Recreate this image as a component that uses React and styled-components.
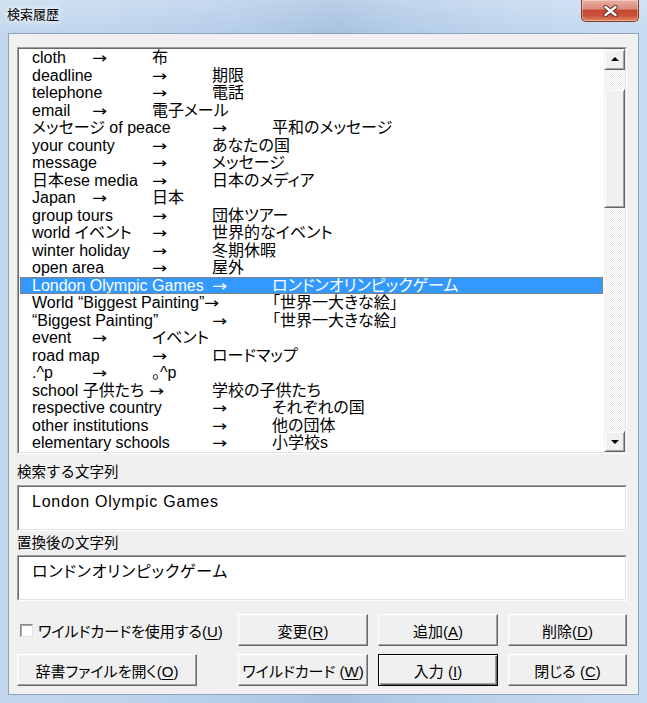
import React from 'react';
import styled, { createGlobalStyle, css } from 'styled-components';

const UI = `"Liberation Sans", "Noto Sans CJK JP", sans-serif`;
const JP = `"Noto Sans CJK JP", sans-serif`;

const GlobalStyle = createGlobalStyle`
  html, body { margin: 0; padding: 0; }
  body { width: 647px; height: 703px; overflow: hidden; background: #c4d8ee; }
`;

const Window = styled.div`
  width: 647px;
  height: 703px;
  box-sizing: border-box;
  display: flex;
  flex-direction: column;
  padding: 0 8px 8px 8px;
  font-family: ${UI};
  background:
    linear-gradient(180deg, rgba(255,255,255,0.22) 0px, rgba(255,255,255,0) 33px),
    linear-gradient(90deg, #c3d8ee 0%, #bed4ec 18%, #b5cde9 36%, #a7c1df 52%, #b2cbe7 62%, #bfd5ed 80%, #c6dbf1 100%);
`;

const TitleBar = styled.div`
  height: 33px;
  flex: none;
  margin: 0 -8px;
  padding: 0 8px 0 7px;
  display: flex;
  justify-content: space-between;
  align-items: flex-start;
`;

const Title = styled.div`
  margin-top: 6px;
  font-family: ${JP};
  font-size: 13px;
  line-height: 16px;
  color: #000;
  text-shadow: 0 0 5px #fff, 0 0 9px rgba(255,255,255,0.9);
`;

const CloseButton = styled.div`
  width: 58px;
  height: 22px;
  box-sizing: border-box;
  border: 1px solid #833a2c;
  border-top: none;
  border-radius: 0 0 5px 5px;
  background: linear-gradient(180deg, #eab0a3 0%, #dc8c7c 42%, #c4452d 50%, #c8533a 75%, #df8a5f 100%);
  box-shadow: inset 0 0 0 1px rgba(255,255,255,0.35);
  display: flex;
  align-items: center;
  justify-content: center;
`;

const Client = styled.div`
  flex: 1;
  min-height: 0;
  background: #f0f0f0;
  border: 1px solid #8fa3bb;
  padding: 13px 11px 8px 8px;
  display: flex;
  flex-direction: column;
`;

const SunkenOuter = styled.div`
  box-sizing: border-box;
  height: ${p => p.$h}px;
  flex: none;
  border: 1px solid;
  border-color: #a0a0a0 #ffffff #ffffff #a0a0a0;
  display: flex;
`;

const SunkenInner = styled.div`
  flex: 1;
  min-width: 0;
  border: 1px solid;
  border-color: #696969 #e3e3e3 #e3e3e3 #696969;
  background: #fff;
  display: flex;
  overflow: hidden;
`;

const Rows = styled.div`
  flex: 1;
  min-width: 0;
  padding: 0 1px;
  overflow: hidden;
`;

const Row = styled.div`
  height: 17.5px;
  line-height: 17.5px;
  padding-left: 12px;
  font-size: 16px;
  font-feature-settings: "palt" 1;
  white-space: pre;
  tab-size: 60px;
  color: #000;
  box-sizing: border-box;
  ${p => p.$selected && css`
    background: #3399ff;
    color: #fff;
    outline: 1px dotted #c86a12;
    outline-offset: -1px;
  `}
`;

const RowArrow = styled.span`
  display: inline-block;
  font-family: "DejaVu Sans", sans-serif;
  font-size: 15px;
  line-height: 17.5px;
  font-feature-settings: normal;
  transform: scaleX(1.2);
  transform-origin: left center;
  margin-right: 2.6px;
`;

const ScrollBar = styled.div`
  width: 21px;
  flex: none;
  display: flex;
  flex-direction: column;
`;

const raised = css`
  box-sizing: border-box;
  background: #f0f0f0;
  border: 1px solid;
  border-color: #f0f0f0 #696969 #696969 #f0f0f0;
  box-shadow: inset 1px 1px 0 #ffffff, inset -1px -1px 0 #a0a0a0;
`;

const ScrollButton = styled.div`
  ${raised};
  height: 21px;
  flex: none;
  display: flex;
  align-items: center;
  justify-content: center;
`;

const Arrow = styled.span`
  width: 0;
  height: 0;
  border-left: 4px solid transparent;
  border-right: 4px solid transparent;
  ${p => (p.$down
    ? css`border-top: 4px solid #000; margin-top: 1px;`
    : css`border-bottom: 4px solid #000; margin-bottom: 1px;`)}
`;

const Track = styled.div`
  flex: 1;
  background: repeating-conic-gradient(#ffffff 0 25%, #ebebeb 0 50%) 0 0 / 2px 2px;
`;

const Thumb = styled.div`
  ${raised};
  height: ${p => p.$size}px;
  margin-top: ${p => p.$offset}px;
`;

const FieldLabel = styled.div`
  flex: none;
  font-family: ${JP};
  font-size: 14.5px;
  line-height: 20px;
  color: #000;
  padding: ${p => (p.$first ? '7px 0 4px 0' : '1px 0 3px 0')};
`;

const FieldText = styled.div`
  padding: 5px 0 0 13px;
  font-size: 16px;
  line-height: 20px;
  letter-spacing: 0.75px;
  font-feature-settings: "palt" 1;
  color: #000;
  white-space: pre;
`;

const Controls = styled.div`
  margin-top: 13px;
  flex: none;
  display: grid;
  grid-template-columns: 1fr 130px 120px 119px;
  grid-template-rows: 32px 32px;
  column-gap: 10px;
  row-gap: 8px;
`;

const CheckRow = styled.label`
  display: flex;
  align-items: center;
  gap: 5px;
  padding-left: 3px;
  font-size: 15px;
  font-feature-settings: "palt" 1;
  color: #000;
`;

const CheckBox = styled.span`
  width: 13px;
  height: 13px;
  box-sizing: border-box;
  background: #fff;
  border: 1px solid;
  border-color: #8a8a8a #e3e3e3 #e3e3e3 #8a8a8a;
  box-shadow: inset 1px 1px 0 #a8a8a8;
  flex: none;
`;

const Button = styled.button`
  ${raised};
  height: 32px;
  margin: 0;
  padding: 0;
  border-color: #ffffff #696969 #696969 #ffffff;
  box-shadow: inset -1px -1px 0 #a0a0a0, inset 1px 1px 0 #f4f4f4;
  font-family: ${UI};
  font-size: 15px;
  font-feature-settings: "palt" 1;
  color: #000;
  width: ${p => (p.$w ? `${p.$w}px` : 'auto')};
  justify-self: ${p => (p.$w ? 'start' : 'stretch')};
  ${p => p.$default && css`
    border: 1px solid #000;
    box-shadow: inset 1px 1px 0 #ffffff, inset -1px -1px 0 #696969, inset -2px -2px 0 #a0a0a0;
  `}
`;

const Underline = styled.u`
  text-decoration-thickness: 1px;
  text-underline-offset: 2px;
`;

const entries = [
  'cloth\t→\t布',
  'deadline\t→\t期限',
  'telephone\t→\t電話',
  'email\t→\t電子メール',
  'メッセージ of peace\t→\t平和のメッセージ',
  'your county\t→\tあなたの国',
  'message\t→\tメッセージ',
  '日本ese media\t→\t日本のメディア',
  'Japan\t→\t日本',
  'group tours\t→\t団体ツアー',
  'world イベント\t→\t世界的なイベント',
  'winter holiday\t→\t冬期休暇',
  'open area\t→\t屋外',
  'London Olympic Games\t→\tロンドンオリンピックゲーム',
  'World “Biggest Painting”→\t「世界一大きな絵」',
  '“Biggest Painting”\t→\t「世界一大きな絵」',
  'event\t→\tイベント',
  'road map\t→\tロードマップ',
  '.^p\t→\t。^p',
  'school 子供たち →\t学校の子供たち',
  'respective country\t→\tそれぞれの国',
  'other institutions\t\t→\t他の団体',
  'elementary schools\t→\t小学校s',
];

const SELECTED = 13;

function CloseGlyph() {
  return (
    <svg width="15" height="12" viewBox="0 0 15 12">
      <path d="M2.5 2 L12.5 10 M12.5 2 L2.5 10" stroke="#5a2a22" strokeWidth="4.2" strokeLinecap="round" />
      <path d="M2.5 2 L12.5 10 M12.5 2 L2.5 10" stroke="#ffffff" strokeWidth="2.4" strokeLinecap="round" />
    </svg>
  );
}

function Entry({ text }) {
  const parts = text.split('→');
  return parts.map((p, i) => (
    <React.Fragment key={i}>
      {i > 0 && <RowArrow>→</RowArrow>}
      {p}
    </React.Fragment>
  ));
}

function Label({ text, keyChar, spaced }) {
  return (
    <>
      {text}
      {spaced ? ' (' : '('}
      <Underline>{keyChar}</Underline>)
    </>
  );
}

export default function App() {
  return (
    <>
      <GlobalStyle />
      <Window>
        <TitleBar>
          <Title>検索履歴</Title>
          <CloseButton>
            <CloseGlyph />
          </CloseButton>
        </TitleBar>
        <Client>
          <SunkenOuter $h={407}>
            <SunkenInner>
              <Rows>
                {entries.map((e, i) => (
                  <Row key={i} $selected={i === SELECTED}><Entry text={e} /></Row>
                ))}
              </Rows>
              <ScrollBar>
                <ScrollButton><Arrow /></ScrollButton>
                <Track>
                  <Thumb $offset={19} $size={119} />
                </Track>
                <ScrollButton><Arrow $down /></ScrollButton>
              </ScrollBar>
            </SunkenInner>
          </SunkenOuter>

          <FieldLabel $first>検索する文字列</FieldLabel>
          <SunkenOuter $h={46}>
            <SunkenInner>
              <FieldText>London Olympic Games</FieldText>
            </SunkenInner>
          </SunkenOuter>

          <FieldLabel>置換後の文字列</FieldLabel>
          <SunkenOuter $h={46}>
            <SunkenInner>
              <FieldText>ロンドンオリンピックゲーム</FieldText>
            </SunkenInner>
          </SunkenOuter>

          <Controls>
            <CheckRow>
              <CheckBox />
              <span><Label text="ワイルドカードを使用する" keyChar="U" /></span>
            </CheckRow>
            <Button><Label text="変更" keyChar="R" /></Button>
            <Button><Label text="追加" keyChar="A" /></Button>
            <Button><Label text="削除" keyChar="D" /></Button>
            <Button $w={180}><Label text="辞書ファイルを開く" keyChar="O" /></Button>
            <Button><Label text="ワイルドカード" keyChar="W" spaced /></Button>
            <Button $default><Label text="入力" keyChar="I" spaced /></Button>
            <Button><Label text="閉じる" keyChar="C" spaced /></Button>
          </Controls>
        </Client>
      </Window>
    </>
  );
}
